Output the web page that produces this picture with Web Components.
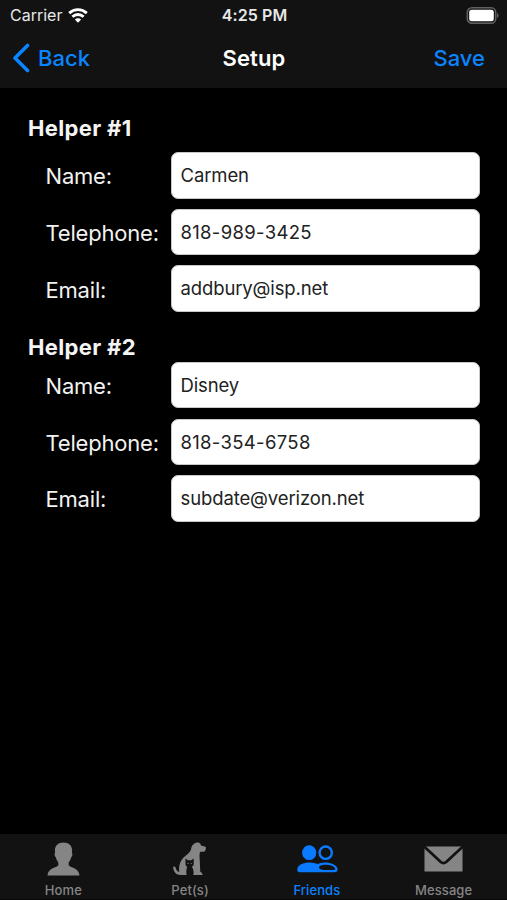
<!DOCTYPE html>
<html lang="en">
<head>
<meta charset="utf-8">
<title>Setup</title>
<style>
  body {
    margin: 0;
    background: #000;
    font-family: Inter, "Liberation Sans", sans-serif;
  }
</style>
</head>
<body>
<setup-screen></setup-screen>

<script>
const define = (name, html) => {
  const template = document.createElement('template');
  template.innerHTML = html;

  customElements.define(name, class extends HTMLElement {
    constructor() {
      super();
      this.attachShadow({ mode: 'open' });
      this.shadowRoot.appendChild(template.content.cloneNode(true));
    }
  });
};

define('status-bar', `
  <style>
    :host {
      display: grid;
      grid-template-columns: 1fr auto 1fr;
      align-items: center;
      height: 30px;
      padding: 0 8px 0 10px;
      box-sizing: border-box;
      color: #e8e8e8;
      font-size: 16px;
      line-height: 30px;
    }

    .carrier {
      display: flex;
      align-items: center;
      gap: 6px;
    }

    .time {
      font-weight: 600;
      letter-spacing: 0.1px;
    }

    .battery {
      justify-self: end;
    }

    svg {
      display: block;
    }
  </style>
  <div class="carrier">
    <span>Carrier</span>
    <svg width="20" height="15" viewBox="0 0 20 15" fill="none" stroke="#fff" stroke-width="2.9">
      <path d="M1.2 5.1C6.2 .5 13.8 .5 18.8 5.1"/>
      <path d="M4.4 8.7C7.5 5.8 12.5 5.8 15.6 8.7"/>
      <path d="M10 14.8L6.9 11.5C8.6 9.7 11.4 9.7 13.1 11.5Z" fill="#fff" stroke="none"/>
    </svg>
  </div>
  <div class="time">4:25 PM</div>
  <svg class="battery" width="33" height="17" viewBox="0 0 33 17">
    <rect x="1.3" y=".8" width="28.4" height="15.4" rx="4.5" fill="#121212" stroke="#606060" stroke-width="1.5"/>
    <rect x="3.2" y="2.8" width="24.6" height="11.4" rx="2.5" fill="#fff"/>
    <path d="M31 6v5c2-.8 2-4.2 0-5z" fill="#606060"/>
  </svg>
`);

define('nav-bar', `
  <style>
    :host {
      display: grid;
      grid-template-columns: 1fr auto 1fr;
      align-items: center;
      height: 58px;
      padding: 0 12px 2px 13px;
      box-sizing: border-box;
      font-size: 22px;
      line-height: 28px;
    }

    .back {
      display: flex;
      align-items: center;
      gap: 7px;
    }

    .back, .action {
      color: #0a84ff;
      font-weight: 500;
    }

    .title {
      color: #fff;
      font-weight: 600;
      letter-spacing: 0.1px;
    }

    .action {
      justify-self: end;
      padding-right: 10px;
    }
  </style>
  <div class="back">
    <svg width="18" height="30" viewBox="0 0 18 30" fill="none" stroke="#0a84ff" stroke-width="3.6" stroke-linecap="round" stroke-linejoin="round">
      <path d="M14.5 2.5L2 15l12.5 12.5"/>
    </svg>
    <slot name="back"></slot>
  </div>
  <div class="title"><slot></slot></div>
  <div class="action"><slot name="action"></slot></div>
`);

define('helper-group', `
  <style>
    :host {
      display: block;
    }

    .heading {
      margin: 0;
      padding-left: 28px;
      color: #f4f4f4;
      font-size: 22px;
      font-weight: 700;
      line-height: 28px;
      letter-spacing: 0.35px;
    }

    .fields {
      display: flex;
      flex-direction: column;
      gap: 10.3px;
      padding-top: var(--heading-gap, 10px);
    }
  </style>
  <h2 class="heading"><slot name="heading"></slot></h2>
  <div class="fields"><slot></slot></div>
`);

define('form-field', `
  <style>
    :host {
      display: grid;
      grid-template-columns: 125px 1fr;
      align-items: center;
      height: 46.3px;
      padding: 0 27px 0 45.5px;
    }

    .label {
      color: #f2f2f2;
      font-size: 22px;
      line-height: 28px;
      letter-spacing: -0.2px;
      padding-top: 2px;
      white-space: nowrap;
    }

    .value {
      height: 100%;
      padding: 0 10px 0 9px;
      box-sizing: border-box;
      border: 1px solid #c8c8c8;
      border-radius: 7px;
      background: #fff;
      color: #222;
      font-size: 18.5px;
      line-height: 44.3px;
      letter-spacing: -0.12px;
    }

    :host([numeric]) .value {
      letter-spacing: 0.32px;
    }
  </style>
  <div class="label"><slot name="label"></slot></div>
  <div class="value"><slot></slot></div>
`);

define('tab-bar', `
  <style>
    :host {
      display: grid;
      grid-template-columns: repeat(4, 1fr);
      height: 66.5px;
      box-sizing: border-box;
      border-bottom: 1px solid #050505;
      background: #121212;
    }
  </style>
  <slot></slot>
`);

define('tab-item', `
  <style>
    :host {
      display: flex;
      flex-direction: column;
      align-items: center;
      color: #858585;
      font-size: 13px;
      font-weight: 500;
      line-height: 16px;
      letter-spacing: 0.1px;
    }

    :host([active]) {
      color: #0a84ff;
    }

    .icon {
      display: flex;
      align-items: center;
      height: 48px;
      padding-top: 3px;
      box-sizing: border-box;
    }
  </style>
  <div class="icon"><slot name="icon"></slot></div>
  <slot></slot>
`);

define('setup-screen', `
  <style>
    :host {
      display: flex;
      flex-direction: column;
      height: 900px;
      background: #000;
    }

    header {
      background: #121212;
    }

    main {
      flex: 1;
      padding-top: 26.3px;
    }

    .second {
      margin-top: 21.3px;
      --heading-gap: 1px;
    }

    svg {
      display: block;
    }
  </style>
  <header>
    <status-bar></status-bar>
    <nav-bar>
      <span slot="back">Back</span>
      Setup
      <span slot="action">Save</span>
    </nav-bar>
  </header>
  <main>
    <helper-group>
      <span slot="heading">Helper #1</span>
      <form-field><span slot="label">Name:</span>Carmen</form-field>
      <form-field numeric><span slot="label">Telephone:</span>818-989-3425</form-field>
      <form-field><span slot="label">Email:</span>addbury@isp.net</form-field>
    </helper-group>
    <helper-group class="second">
      <span slot="heading">Helper #2</span>
      <form-field><span slot="label">Name:</span>Disney</form-field>
      <form-field numeric><span slot="label">Telephone:</span>818-354-6758</form-field>
      <form-field><span slot="label">Email:</span>subdate@verizon.net</form-field>
    </helper-group>
  </main>
  <tab-bar>
    <tab-item>
      <svg slot="icon" width="34" height="34" viewBox="-.5 0 34 34" fill="#858585">
        <path d="M17 .5c5.3 0 8.6 3 8.6 8 0 1 0 1.8-.2 2.5.9.5.7 3-.8 4.5-.5 2-1.3 3.5-2.4 4.700v3c1 2 10.5 2.800 10.800 10.300H1c.3-7.500 9.800-8.300 10.800-10.300v-3c-1.100-1.200-1.900-2.700-2.400-4.700-1.500-1.500-1.700-4-.8-4.500-.2-.7-.2-1.500-.2-2.500 0-5 3.300-8 8.600-8z"/>
      </svg>
      Home
    </tab-item>
    <tab-item>
      <svg slot="icon" width="34" height="34" viewBox="0 0 34 34">
        <path fill="#858585" d="M21.5 1.5C23 .3 26 .2 27.5 2l.5 1.500 4.500 1.300c.8.4.5 3-.5 4.200-1 1-3 .8-4.800.8-.5 1.500-.8 2.700-.7 4.200.3 5 .5 10 .8 16 1.500.3 2.200 1.200 2.200 3H7.500C3 33 .5 29.500.2 25.500c0-1.500 2-1.300 2.400 0 .5 2.500 1.700 4 3.600 4.500C5.500 21 8.500 17 13 13.500c3-2.300 4.500-4.500 5-6 .3-3 1.500-5 3.500-6z"/>
        <path fill="#121212" d="M12.500 16.500l2.500 1.800h3.200l2.500-1.800v5.500c0 1.500-1 2.300-1.800 2.800 1.500 2 2 5 1.500 8.200h-6.700c-.8-3-.3-6 .5-8.200-1-.5-1.700-1.300-1.700-2.800z"/>
        <path stroke="#858585" stroke-width=".8" d="M14.300 21.500h1.300M17.500 21.500h1.300"/>
      </svg>
      Pet(s)
    </tab-item>
    <tab-item active>
      <svg slot="icon" width="42" height="28" viewBox="-.5 0 42 28" fill="#0a7aff">
        <ellipse cx="12.7" cy="7.7" rx="7.1" ry="7.4"/>
        <ellipse cx="29.2" cy="7.7" rx="6.1" ry="6.2" fill="none" stroke="#0a7aff" stroke-width="2.4"/>
        <path d="M.8 24c.5-4 6-6.500 12.200-6.500 3.500 0 6 .8 8 1.600 2-.8 4.500-1.600 7.500-1.600 6 0 12 2.500 12.600 6.500.2 2-1 3.300-3 3.300H3.300c-2 0-2.700-1.300-2.500-3.300z"/>
        <path fill="#121212" d="M23.800 20.800c4-1.600 12-1.300 14.500 2.200.8 1.300.2 2-1 2H27.500c-2.500 0-5-1-5-2.500 0-.8.5-1.400 1.300-1.700z"/>
      </svg>
      Friends
    </tab-item>
    <tab-item>
      <svg slot="icon" width="39" height="26" viewBox="0 0 39 26">
        <path fill="#858585" d="M.5.500h38v25H.5z"/>
        <path fill="none" stroke="#121212" stroke-width="2.8" stroke-linejoin="round" d="M-.5 0l17.300 16q2.700 2.200 5.400 0L39.500 0"/>
      </svg>
      Message
    </tab-item>
  </tab-bar>
`);
</script>
</body>
</html>
